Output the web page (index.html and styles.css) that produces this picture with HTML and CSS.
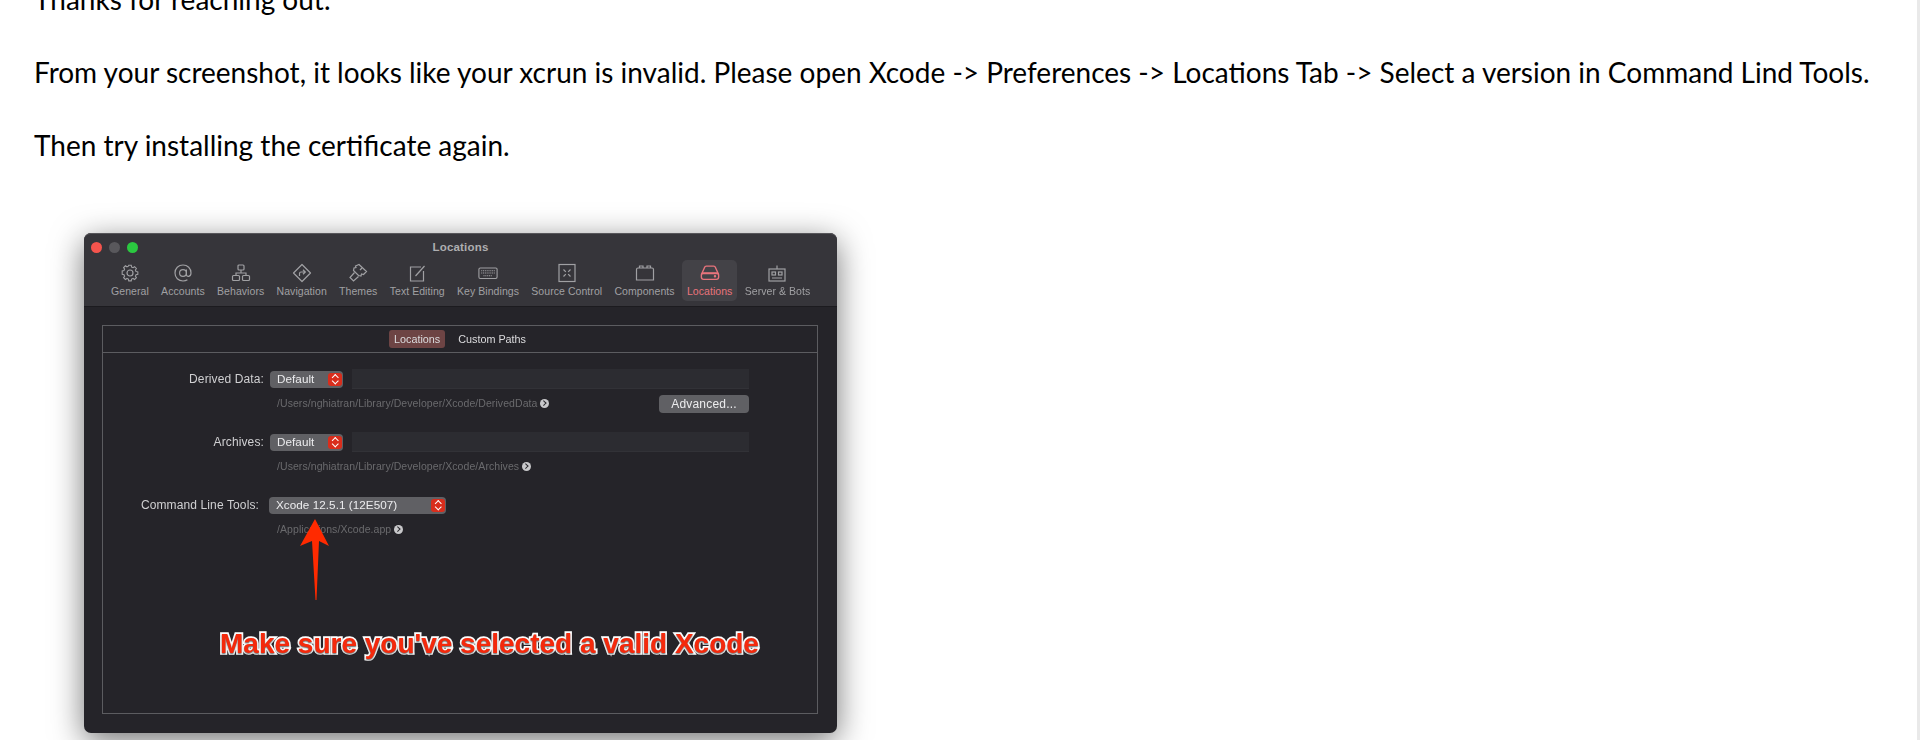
FILE: index.html
```html
<!DOCTYPE html>
<html>
<head>
    <title>Support reply</title>
    <link rel="stylesheet" href="styles.css">
</head>
<body>
    <div class="message">
        <p>Thanks for reaching out.</p>
        <p>From your screenshot, it looks like your xcrun is invalid. Please open Xcode -&gt; Preferences -&gt; Locations Tab -&gt; Select a version in Command Lind Tools.</p>
        <p>Then try installing the certificate again.</p>
    </div>

    <div class="window">
        <div class="title-row">
            <div class="lights">
                <span class="light red"></span>
                <span class="light grey"></span>
                <span class="light green"></span>
            </div>
            <div class="title">Locations</div>
            <div></div>
        </div>

        <div class="toolbar">
            <div class="tool">
                <svg viewBox="0 0 20 20"><path d="M8.600 2.500h2.800l.4 2 1.600.7 1.700-1.100 2 2-1.100 1.700.7 1.600 2 .4v2.800l-2 .4-.7 1.600 1.100 1.700-2 2-1.700-1.100-1.600.7-.4 2H8.600l-.4-2-1.600-.7-1.700 1.100-2-2 1.100-1.700-.7-1.600-2-.4V8.800l2-.4.7-1.600L2.900 5.100l2-2 1.700 1.100 1.600-.7z" transform="translate(1 0) scale(.9)"/><circle cx="10" cy="10" r="3"/></svg>
                <span>General</span>
            </div>
            <div class="tool">
                <svg viewBox="0 0 20 20"><circle cx="10" cy="10" r="3.400"/><path d="M13.400 6.600v5c0 2.800 4.600 2.400 4.600-1.600 0-4.600-3.400-8-8-8s-8 3.400-8 8 3.400 8 8 8c1.800 0 3.200-.4 4.400-1.200"/></svg>
                <span>Accounts</span>
            </div>
            <div class="tool">
                <svg viewBox="0 0 20 20"><rect x="7" y="2" width="6" height="5" rx="1"/><rect x="1.500" y="12.500" width="7" height="5" rx="1"/><rect x="11.500" y="12.500" width="7" height="5" rx="1"/><path d="M10 7v3M5 12.500V10h10v2.500"/></svg>
                <span>Behaviors</span>
            </div>
            <div class="tool">
                <svg viewBox="0 0 20 20"><path d="M10 1.500l8.500 8.500-8.500 8.500L1.500 10z" stroke-linejoin="round"/><path d="M7.500 13v-2.500q0-1.500 1.500-1.500h4M11 6.800L13.300 9 11 11.200"/></svg>
                <span>Navigation</span>
            </div>
            <div class="tool">
                <svg viewBox="0 0 20 20"><path d="M11 1.500l7.500 7-3 3-2-.5-.5 2-2.500-.5-5-5 .5-2.500 2-.5-.5-1.500z"/><path d="M6.500 9.500l-4.500 5 3.500 3.500 5-4.500"/><path d="M14 5l-2 2"/></svg>
                <span>Themes</span>
            </div>
            <div class="tool">
                <svg viewBox="0 0 20 20"><path d="M14 4H3.500v14h13V8"/><path d="M8.500 13l9-10"/></svg>
                <span>Text Editing</span>
            </div>
            <div class="tool">
                <svg viewBox="0 0 22 20"><rect x="1" y="4.500" width="20" height="11.500" rx="1.500"/><path d="M3.500 7.500h15M3.500 10h15M6 13h10" stroke-dasharray="1.200 .8"/></svg>
                <span>Key Bindings</span>
            </div>
            <div class="tool">
                <svg viewBox="0 0 20 20"><rect x="2" y="1.500" width="16" height="17"/><path d="M6.500 6.500l2.300 2.300M13.500 6.500l-2.300 2.300M6.500 13.500l2.300-2.300M13.500 13.500l-2.300-2.300"/></svg>
                <span>Source Control</span>
            </div>
            <div class="tool">
                <svg viewBox="0 0 20 20"><path d="M1.500 6.500q0-1.500 1.500-1.500h14q1.500 0 1.500 1.500V17h-17z"/><path d="M4.500 5V3h3.500v2M12 5V3h3.500v2"/></svg>
                <span>Components</span>
            </div>
            <div class="tool active">
                <svg viewBox="0 0 22 20"><path d="M5 4q.3-1.500 2-1.500h8q1.700 0 2 1.500l3 6.500H2z"/><rect x="1.500" y="10" width="19" height="7" rx="2.500"/><circle cx="16.500" cy="13.500" r=".6"/></svg>
                <span>Locations</span>
            </div>
            <div class="tool">
                <svg viewBox="0 0 20 20"><rect x="2" y="6" width="16" height="12"/><path d="M10 6V2.500M5 15h10"/><rect x="5" y="9" width="3.500" height="3"/><rect x="11.500" y="9" width="3.500" height="3"/></svg>
                <span>Server &amp; Bots</span>
            </div>
        </div>

        <div class="content">
            <div class="pane">
                <div class="tabs">
                    <span class="tab selected">Locations</span>
                    <span class="tab">Custom Paths</span>
                </div>

                <div class="form">
                    <div class="group">
                        <div class="row">
                            <label>Derived Data:</label>
                            <div class="popup">Default<span class="stepper"></span></div>
                            <div class="path-field"></div>
                        </div>
                        <div class="path-row">
                            <span class="path">/Users/nghiatran/Library/Developer/Xcode/DerivedData<i class="go"></i></span>
                            <button class="btn-advanced">Advanced...</button>
                        </div>
                    </div>
                    <div class="group">
                        <div class="row">
                            <label>Archives:</label>
                            <div class="popup">Default<span class="stepper"></span></div>
                            <div class="path-field"></div>
                        </div>
                        <div class="path-row">
                            <span class="path">/Users/nghiatran/Library/Developer/Xcode/Archives<i class="go"></i></span>
                        </div>
                    </div>
                    <div class="group">
                        <div class="row row-tools">
                            <label>Command Line Tools:</label>
                            <div class="popup wide">Xcode 12.5.1 (12E507)<span class="stepper"></span></div>
                        </div>
                        <div class="path-row">
                            <span class="path">/Applications/Xcode.app<i class="go"></i></span>
                        </div>
                    </div>
                </div>
            </div>
        </div>

        <!-- annotation drawn on top of the screenshot -->
        <svg class="arrow" viewBox="0 0 32 82"><path d="M16 0L30 27 20 22 17.500 81h-1L13 22 1 27z"/></svg>
        <div class="note">Make sure you've selected a valid Xcode</div>
    </div>
</body>
</html>
```

FILE: styles.css
```css
html, body {
    height: 100%;
    overflow: hidden;
}
body {
    box-sizing: border-box;
    margin: 0;
    background: white;
    border-right: 3px solid #e9e9e9;
    font-family: 'Liberation Sans', Arial, sans-serif;
}
.message {
    margin-top: -37px;
    padding-left: 34px;
}
.message p {
    margin: 0;
    font-family: Lato, sans-serif;
    font-size: 28px;
    line-height: 73px;
    color: #000;
    white-space: nowrap;
}
.window {
    position: relative;
    box-sizing: border-box;
    width: 753px;
    height: 500px;
    margin: 51px 0 0 84px;
    background: #252429;
    border-radius: 7px;
    box-shadow: 0 8px 32px rgba(0,0,0,0.55);
    filter: blur(0.4px);
}
.title-row {
    display: grid;
    grid-template-columns: 1fr auto 1fr;
    align-items: center;
    height: 27px;
    background: #36353a;
    border-radius: 7px 7px 0 0;
    border-top: 1px solid #57565a;
    box-sizing: border-box;
}
.lights {
    display: flex;
    gap: 7px;
    padding-left: 7px;
}
.light {
    width: 11px;
    height: 11px;
    border-radius: 50%;
}
.red { background: #f5544d; }
.grey { background: #59585c; }
.green { background: #2bc840; }
.title {
    font-size: 11.5px;
    font-weight: bold;
    color: #aeaeb0;
    letter-spacing: 0.2px;
}
.toolbar {
    display: flex;
    gap: 2.3px;
    height: 47px;
    padding-left: 22px;
    background: #36353a;
    border-bottom: 1px solid #1c1b1f;
    box-sizing: border-box;
}
.tool {
    display: flex;
    flex-direction: column;
    align-items: center;
    height: 41px;
    box-sizing: border-box;
    padding: 3px 5px 0;
    border-radius: 5px;
    font-size: 10.5px;
    line-height: 12px;
    letter-spacing: 0.06px;
    color: #a0a0a3;
    white-space: nowrap;
}
.tool svg {
    width: 20px;
    height: 20px;
    margin-bottom: 2px;
    fill: none;
    stroke: #a0a0a3;
    stroke-width: 1.2;
}
.tool.active {
    background: #434247;
    color: #e8747c;
}
.tool.active svg {
    stroke: #e8747c;
    stroke-width: 1.5;
}
.content {
    padding: 18px 19px 19px 18px;
}
.pane {
    box-sizing: border-box;
    height: 389px;
    border: 1px solid #5c5c60;
}
.tabs {
    display: flex;
    justify-content: center;
    align-items: center;
    gap: 8px;
    height: 26px;
    border-bottom: 1px solid #5c5c60;
}
.tab {
    padding: 0 5px;
    height: 18px;
    line-height: 18px;
    border-radius: 3px;
    font-size: 10.8px;
    color: #dcdcde;
}
.tab.selected {
    background: #6d4444;
}
.form {
    width: 646px;
    padding-top: 16px;
    display: flex;
    flex-direction: column;
    gap: 19px;
    color: #d0d0d2;
}
.row {
    display: flex;
    align-items: center;
    gap: 6px;
    height: 20px;
    font-size: 12px;
}
.row label {
    width: 161px;
    text-align: right;
    letter-spacing: 0.12px;
    white-space: nowrap;
}
.row-tools label {
    width: 156px;
    margin-right: 4px;
}
.popup {
    position: relative;
    box-sizing: border-box;
    width: 73px;
    height: 17px;
    line-height: 16px;
    padding-left: 7px;
    border-radius: 4px;
    background: #606064;
    color: #ececee;
    font-size: 11.7px;
    letter-spacing: 0.05px;
}
.popup.wide {
    width: 177px;
}
.stepper {
    position: absolute;
    top: 2px;
    right: 1px;
    width: 14px;
    height: 13px;
    border-radius: 3px;
    background: #d92d1c;
}
.stepper::before, .stepper::after {
    content: "";
    position: absolute;
    left: 4.5px;
    width: 3.5px;
    height: 3.5px;
    border-left: 1.2px solid #fff;
    border-top: 1.2px solid #fff;
    transform: rotate(45deg);
}
.stepper::before { top: 2.5px; }
.stepper::after {
    bottom: 2.5px;
    transform: rotate(225deg);
}
.path-field {
    width: 397px;
    height: 20px;
    margin-left: 3px;
    background: #2c2c31;
    border-bottom: 1px solid #323237;
    box-sizing: border-box;
}
.path-row {
    display: flex;
    justify-content: space-between;
    height: 20px;
    margin-top: 4px;
    padding-left: 174px;
}
.path {
    display: flex;
    align-items: center;
    gap: 3px;
    font-size: 10.5px;
    letter-spacing: 0.07px;
    color: #6a6a6d;
}
.go {
    position: relative;
    width: 9px;
    height: 9px;
    border-radius: 50%;
    background: #c8c8ca;
}
.go::after {
    content: "";
    position: absolute;
    left: 2px;
    top: 2.5px;
    width: 2.5px;
    height: 2.5px;
    border-top: 1px solid #252429;
    border-right: 1px solid #252429;
    transform: rotate(45deg);
}
button.btn-advanced {
    width: 90px;
    height: 18px;
    margin-top: 2px;
    padding: 0;
    border: none;
    border-radius: 4px;
    background: #606064;
    color: #ececee;
    font-family: inherit;
    font-size: 12px;
    letter-spacing: 0.2px;
}
.arrow {
    position: absolute;
    left: 215px;
    top: 286px;
    width: 32px;
    height: 82px;
    fill: #ff2a00;
}
.note {
    position: absolute;
    left: 136px;
    top: 394px;
    font-size: 28px;
    line-height: 34px;
    font-weight: bold;
    white-space: nowrap;
    color: #f4290c;
    -webkit-text-stroke: 3.5px #fff;
    paint-order: stroke fill;
    text-shadow: 0 1px 1.5px rgba(0,0,0,0.6);
}
```
